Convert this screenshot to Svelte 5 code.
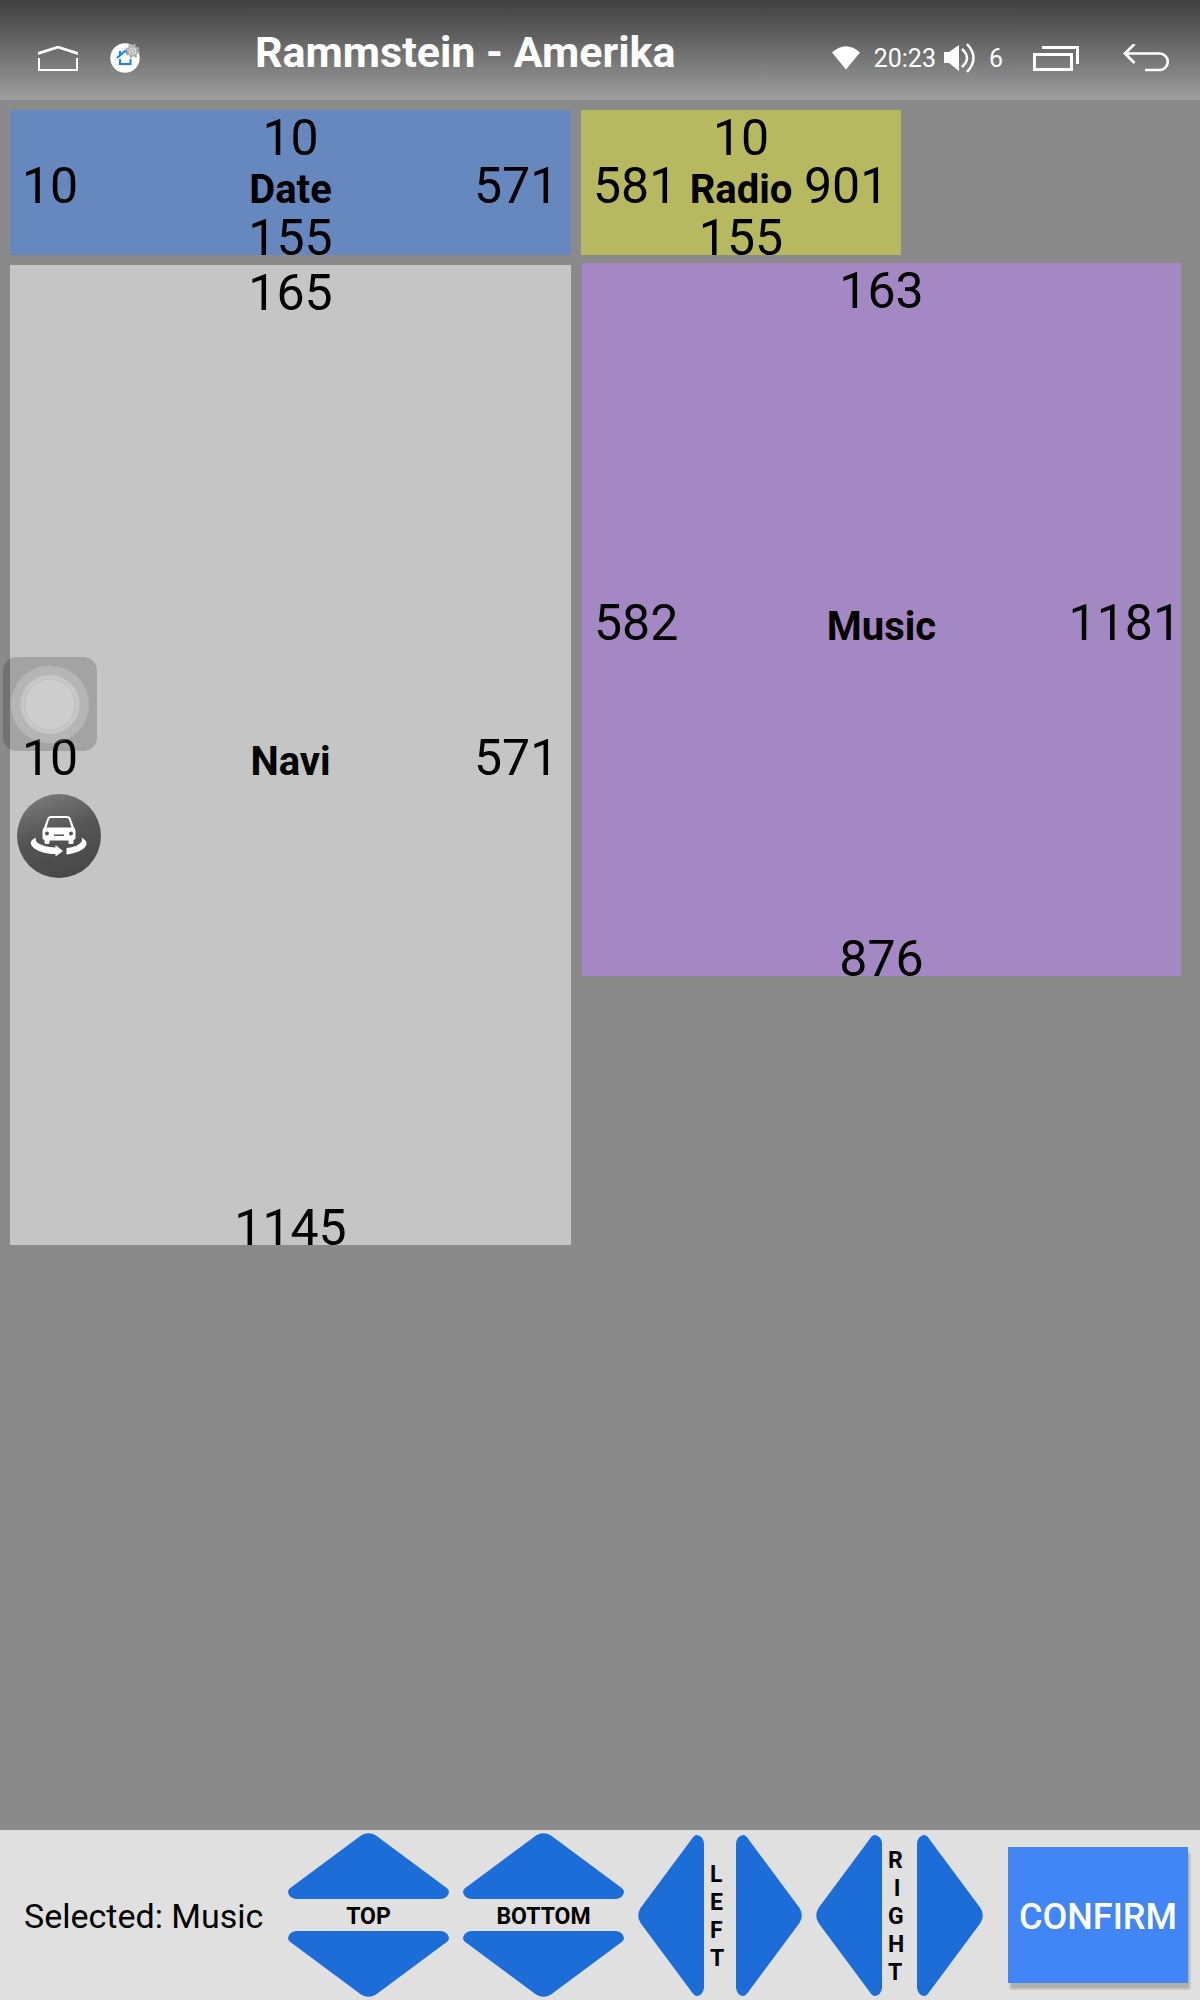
<script>
  const panels = [
    { name: 'Date', left: 10, top: 10, right: 571, bottom: 155, color: '#6788bf' },
    { name: 'Radio', left: 581, top: 10, right: 901, bottom: 155, color: '#b6b95f' },
    { name: 'Navi', left: 10, top: 165, right: 571, bottom: 1145, color: '#c5c5c5' },
    { name: 'Music', left: 582, top: 163, right: 1181, bottom: 876, color: '#a388c3' }
  ];
  let selected = $state('Music');
</script>

{#snippet upArrow()}
  <svg width="161" height="66" viewBox="0 0 161 66" aria-hidden="true">
    <path d="M73 2.500Q80.500-2 88 2.500L156 53Q161 56 161 59Q160 65 153 66H8Q1 65 0 59Q0 56 5 53Z" />
  </svg>
{/snippet}
{#snippet downArrow()}
  <svg width="161" height="66" viewBox="0 0 161 66" aria-hidden="true">
    <path d="M73 63.500Q80.500 68 88 63.500L156 13Q161 10 161 7Q160 1 153 0H8Q1 1 0 7Q0 10 5 13Z" />
  </svg>
{/snippet}
{#snippet leftArrow()}
  <svg width="66" height="161" viewBox="0 0 66 161" aria-hidden="true">
    <path d="M2.500 73Q-2 80.500 2.500 88L53 156Q56 161 59 161Q65 160 66 153V8Q65 1 59 0Q56 0 53 5Z" />
  </svg>
{/snippet}
{#snippet rightArrow()}
  <svg width="66" height="161" viewBox="0 0 66 161" aria-hidden="true">
    <path d="M63.500 73Q68 80.500 63.500 88L13 156Q10 161 7 161Q1 160 0 153V8Q1 1 7 0Q10 0 13 5Z" />
  </svg>
{/snippet}

<div class="screen">
  <header>
    <button aria-label="Home">
      <svg width="40" height="25" viewBox="0 0 40 25">
        <path d="M0 6L19 0H21L40 6V9L20 2.500L0 9Z" fill="#fff" />
        <path d="M1 12V24H39V12" fill="none" stroke="#fff" stroke-width="2" />
      </svg>
    </button>
    <button aria-label="Launcher settings">
      <svg width="30" height="30" viewBox="0 0 30 30">
        <circle cx="15" cy="15" r="14.700" fill="#fff" />
        <path d="M7 15L15 8L18 10M10 13V8M10 16V21H20.500V16" fill="none" stroke="#0a84ff" stroke-width="2" />
        <circle cx="22.500" cy="8" r="6" fill="none" stroke="#aaa" stroke-width="2.500" stroke-dasharray="2.500 2.200" />
        <circle cx="22.500" cy="8" r="4.600" fill="#e2e2e2" stroke="#b0b0b0" stroke-width="2" />
        <circle cx="22.500" cy="8" r="2" fill="#ddd" stroke="#a0a0a0" stroke-width="1" />
      </svg>
    </button>
    <h1>Rammstein - Amerika</h1>
    <div class="status">
      <svg class="wifi" width="28" height="24" viewBox="0 0 28 24" aria-label="Wi-Fi">
        <path d="M0 6.500Q14-6 28 6.500L14 23.500Z" fill="#fff" />
      </svg>
      <time>20:23</time>
      <svg class="speaker" width="31" height="30" viewBox="0 0 31 30" aria-label="Volume">
        <path d="M0 9H5L15 2V28L5 20H0Z" fill="#fff" />
        <path d="M18 6Q28 15 18 24" fill="none" stroke="#fff" stroke-width="2.500" />
        <path d="M23 1Q36 15 23 29" fill="none" stroke="#fff" stroke-width="2.500" />
      </svg>
      <span class="volume">6</span>
      <button class="recents" aria-label="Recent apps">
        <svg width="46" height="25" viewBox="0 0 46 25">
          <path d="M1.500 8.500H38.500V23.500H1.500Z" fill="none" stroke="#fff" stroke-width="3" />
          <path d="M9 1.500H44.500V18" fill="none" stroke="#fff" stroke-width="3" />
        </svg>
      </button>
      <button aria-label="Back">
        <svg width="46" height="28" viewBox="0 0 46 28">
          <path d="M2 9.500H36.500A8.200 8.200 0 0 1 36.500 26H22" fill="none" stroke="#fff" stroke-width="2.600" />
          <path d="M11.500 0L2 9.500L11.500 19" fill="none" stroke="#fff" stroke-width="2.800" />
        </svg>
      </button>
    </div>
  </header>

  <main>
    {#each panels as p}
      <button
        class="panel"
        aria-pressed={selected === p.name}
        onclick={() => (selected = p.name)}
        style="left:{p.left}px;top:{p.top}px;width:{p.right - p.left}px;height:{p.bottom - p.top}px;background:{p.color}"
      >
        <span class="top">{p.top}</span>
        <span class="middle">
          <span class="left">{p.left}</span>
          <strong>{p.name}</strong>
          <span class="right"><span>{p.right}</span></span>
        </span>
        <span class="bottom">{p.bottom}</span>
      </button>
    {/each}

    <button class="assist" aria-label="Assistive touch">
      <svg width="94" height="94" viewBox="0 0 94 94">
        <rect width="94" height="94" rx="14" fill="#000" fill-opacity="0.170" />
        <circle cx="47" cy="47.500" r="39" fill="#fff" fill-opacity="0.200" />
        <circle cx="47" cy="47.500" r="29.500" fill="#c8c8c8" stroke="#c0c0c0" stroke-width="1" />
        <circle cx="47" cy="47.500" r="25.500" fill="#cdcdcd" stroke="#bcbcbc" stroke-width="1" />
      </svg>
    </button>
    <button class="car" aria-label="Car view">
      <svg width="84" height="84" viewBox="0 0 84 84">
        <defs>
          <linearGradient id="disc" x1="0.200" y1="0" x2="0.500" y2="1">
            <stop offset="0" stop-color="#7b7b7b" />
            <stop offset="0.500" stop-color="#555" />
            <stop offset="1" stop-color="#484848" />
          </linearGradient>
        </defs>
        <circle cx="42" cy="42" r="42" fill="url(#disc)" />
        <path fill="#fff" fill-rule="evenodd" d="M34 22H50Q52.500 22 53.500 24L57 33.500Q58.500 34.500 58.500 37V44Q58.500 45.500 56.500 46V49Q56.500 50 55 50H53Q51.500 50 51.500 49V46.500H32.500V49Q32.500 50 31 50H29Q27.500 50 27.500 49V46Q25.500 45.500 25.500 44V37Q25.500 34.500 27 33.500L30.500 24Q31.500 22 34 22ZM34 24Q32.500 24 32 25.500L29.500 33.500H54.500L52 25.500Q51.500 24 50 24Z" />
        <circle cx="30" cy="39.500" r="2" fill="#555" />
        <circle cx="54" cy="39.500" r="2" fill="#555" />
        <path d="M37 41.200H47" stroke="#555" stroke-width="1.500" />
        <path fill="#fff" d="M19 43.500C17 48 23 52.500 38.500 53.500V51L46 57L38.500 62.500V60C22 60 10 52 15 46ZM64.500 43.500C67 48 61 53 49.500 54V60.500C62 59 73 53 68.500 46.500Z" />
      </svg>
    </button>
  </main>

  <footer>
    <output>Selected: {selected}</output>
    <div class="pair vertical" role="group" aria-label="Top">
      <button aria-label="Top edge up">{@render upArrow()}</button>
      <span class="label">TOP</span>
      <button aria-label="Top edge down">{@render downArrow()}</button>
    </div>
    <div class="pair vertical" role="group" aria-label="Bottom">
      <button aria-label="Bottom edge up">{@render upArrow()}</button>
      <span class="label">BOTTOM</span>
      <button aria-label="Bottom edge down">{@render downArrow()}</button>
    </div>
    <div class="pair" role="group" aria-label="Left">
      <button aria-label="Left edge left">{@render leftArrow()}</button>
      <span class="label stacked">{'L\nE\nF\nT'}</span>
      <button aria-label="Left edge right">{@render rightArrow()}</button>
    </div>
    <div class="pair" role="group" aria-label="Right">
      <button aria-label="Right edge left">{@render leftArrow()}</button>
      <span class="label stacked wide">{'R\n I\nG\nH\nT'}</span>
      <button aria-label="Right edge right">{@render rightArrow()}</button>
    </div>
    <button class="confirm">CONFIRM</button>
  </footer>
</div>

<style>
  :global(body) {
    margin: 0;
  }
  .screen {
    min-height: 100vh;
    display: flex;
    flex-direction: column;
    background: #8a8a8a;
    font-family: Roboto, sans-serif;
    color: #000;
  }
  button {
    display: block;
    margin: 0;
    padding: 0;
    border: 0;
    background: none;
    font: inherit;
    color: inherit;
    cursor: pointer;
  }
  svg {
    display: block;
  }

  header {
    box-sizing: border-box;
    height: 100px;
    padding: 16px 31px 0 38px;
    display: flex;
    align-items: center;
    gap: 32px;
    background: linear-gradient(#414141, #5a5a5a 30%, #9e9e9e);
    color: #fff;
  }
  h1 {
    margin: 0 0 0 83px;
    padding-bottom: 12px;
    font-size: 43px;
    line-height: 52px;
    font-weight: 700;
    white-space: nowrap;
  }
  .status {
    margin-left: auto;
    display: flex;
    align-items: center;
    font-size: 25px;
    line-height: 30px;
  }
  time,
  .volume {
    padding-top: 2px;
  }
  .wifi {
    margin-right: 14px;
  }
  .speaker {
    margin: 0 14px 0 8px;
  }
  .recents {
    margin: 0 44px 0 30px;
  }

  main {
    position: relative;
    flex: 1;
    min-height: 1160px;
  }
  .panel {
    position: absolute;
    display: grid;
    grid-template-rows: minmax(0, 1fr) auto minmax(0, 1fr);
    font-size: 50px;
    text-align: center;
  }
  .top {
    line-height: 56px;
  }
  .middle {
    display: grid;
    grid-template-columns: minmax(0, 1fr) auto minmax(0, 1fr);
    align-items: baseline;
    padding-top: 10px;
    line-height: 34px;
  }
  .middle strong {
    font-size: 40px;
    font-weight: 700;
  }
  .left {
    padding-left: 12px;
    text-align: left;
  }
  .right {
    display: flex;
    justify-content: flex-end;
    text-align: left;
  }
  .right span {
    min-width: 97px;
  }
  .bottom {
    align-self: end;
    line-height: 34px;
  }
  .assist {
    position: absolute;
    left: 3px;
    top: 557px;
  }
  .car {
    position: absolute;
    left: 17px;
    top: 694px;
  }

  footer {
    box-sizing: border-box;
    min-height: 170px;
    padding: 0 12px 0 24px;
    display: flex;
    align-items: center;
    gap: 14px;
    background: #e0e0e0;
  }
  output {
    flex: 1;
    padding-top: 2px;
    font-size: 34px;
    line-height: 40px;
    white-space: nowrap;
  }
  .pair {
    display: flex;
    align-items: center;
    fill: #1c6dd7;
  }
  .vertical {
    flex-direction: column;
  }
  .label {
    padding-top: 4px;
    font-size: 23px;
    line-height: 28px;
    font-weight: 700;
  }
  .stacked {
    box-sizing: border-box;
    width: 32px;
    padding-left: 6px;
    white-space: pre;
  }
  .wide {
    width: 35px;
  }
  .confirm {
    width: 180px;
    height: 136px;
    margin-left: 11px;
    padding-top: 4px;
    background: #4286f5;
    box-shadow: 2px 6px 2px rgba(0, 0, 0, 0.22);
    color: #fff;
    font-size: 36px;
    font-weight: 500;
  }
</style>
